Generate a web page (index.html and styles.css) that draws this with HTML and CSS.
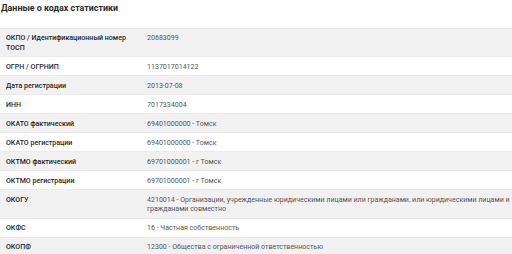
FILE: index.html
```html
<!DOCTYPE html>
<html lang="ru">
<head>
<meta charset="utf-8">
<link rel="stylesheet" href="styles.css">
</head>
<body>
<section class="stats">
  <h2 class="stats-title">Данные о кодах статистики</h2>
  <table class="stats-table">
    <tr class="row odd"><th>ОКПО / Идентификационный номер ТОСП</th><td>20683099</td></tr>
    <tr class="row"><th>ОГРН / ОГРНИП</th><td>1137017014122</td></tr>
    <tr class="row odd"><th>Дата регистрации</th><td>2013-07-08</td></tr>
    <tr class="row"><th>ИНН</th><td>7017334004</td></tr>
    <tr class="row odd"><th>ОКАТО фактический</th><td>69401000000 - Томск</td></tr>
    <tr class="row"><th>ОКАТО регистрации</th><td>69401000000 - Томск</td></tr>
    <tr class="row odd"><th>ОКТМО фактический</th><td>69701000001 - г Томск</td></tr>
    <tr class="row"><th>ОКТМО регистрации</th><td>69701000001 - г Томск</td></tr>
    <tr class="row odd"><th>ОКОГУ</th><td>4210014 - Организации, учрежденные юридическими лицами или гражданами, или юридическими лицами и гражданами совместно</td></tr>
    <tr class="row"><th>ОКФС</th><td>16 - Частная собственность</td></tr>
    <tr class="row odd"><th>ОКОПФ</th><td>12300 - Общества с ограниченной ответственностью</td></tr>
  </table>
</section>
</body>
</html>
```
FILE: styles.css
```css
html, body {
  margin: 0;
  padding: 0;
  background: #ffffff;
}
body {
  font-family: Roboto, "Liberation Sans", sans-serif;
}
.stats-title {
  margin: 0;
  padding: 2px 0 0 1px;
  font-size: 8.9px;
  line-height: 12px;
  font-weight: 700;
  color: #2b2b2b;
  height: 25px;
  box-sizing: border-box;
}
.stats-table {
  width: 100%;
  border-collapse: collapse;
  font-size: 7.05px;
  line-height: 9.4px;
  margin-top: 3px;
}
.row th, .row td {
  padding: 4.3px 6px;
  vertical-align: top;
  text-align: left;
  border-top: 1px solid #ebebeb;
}
.row th {
  width: 129px;
  font-weight: 500;
  color: #1f1f1f;
}
.row td {
  color: #555;
  padding-right: 1px;
}
.row.odd {
  background: #f1f1f1;
}
```
